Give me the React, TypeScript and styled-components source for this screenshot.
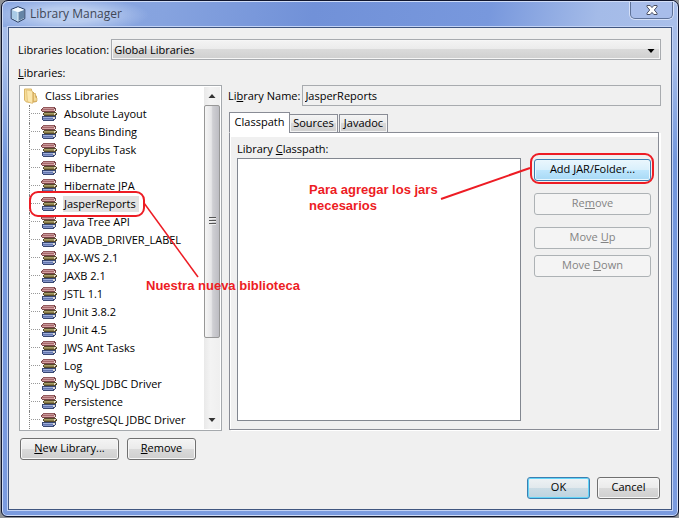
import React from "react";
import styled, { createGlobalStyle, css } from "styled-components";

const Global = createGlobalStyle`
  * { box-sizing: border-box; }
  body { margin: 0; background: #8f9296; }
  body, button, input, select {
    font-family: "Open Sans", "Noto Sans", sans-serif;
    font-size: 11px;
    line-height: 14px;
    color: #000;
  }
  button, input, select { margin: 0; border-radius: 0; }
`;

const Window = styled.div`
  min-height: 100vh;
  display: flex;
  flex-direction: column;
  padding: 0 0 1px 1px;
`;

const Frame = styled.div`
  flex: 1;
  display: flex;
  flex-direction: column;
  border: 1px solid #10162e;
  border-radius: 7px 7px 6px 6px;
  padding: 0 6px 6px;
  background: linear-gradient(180deg, #a9bee9 0, #a5bce9 60px, #7296dc 160px, #7b9bdf 100%);
  box-shadow: inset 0 0 0 1px #cfdcf7;
`;

const TitleBar = styled.header`
  height: 25px;
  margin: 1px -5px 0;
  padding-left: 7px;
  display: flex;
  align-items: flex-start;
  gap: 4px;
  border-radius: 6px 6px 0 0;
  background:
    radial-gradient(ellipse 80px 18px at 66px 13px, rgba(205, 220, 245, 0.7) 40%, rgba(205, 220, 245, 0)),
    linear-gradient(100deg, #8ca9e2 0, #86a3df 24%, #7191d8 46%, #7898dd 72%, #a4bbe8 88%, #a9bfea 100%);
  & > svg { margin-top: 4px; }
`;

const Title = styled.h1`
  flex: 1;
  margin: 4px 0 0;
  font-size: 12px;
  font-weight: 400;
  line-height: 16px;
  color: #3f4757;
`;

const CloseButton = styled.button`
  width: 43px;
  height: 17px;
  margin-right: 4px;
  padding: 0;
  display: flex;
  align-items: center;
  justify-content: center;
  border: 1px solid #5e7299;
  border-top: 0;
  border-radius: 0 0 5px 5px;
  background: #a8bdea;
  box-shadow: 0 0 0 1px #d5e0f8;
`;

const Client = styled.main`
  flex: 1;
  display: flex;
  flex-direction: column;
  padding: 11px 10px 10px;
  border: 1px solid #405680;
  box-shadow: 0 0 0 1px #c3d3f5;
  background: #f0f0f0;
`;

const Field = styled.div`
  display: flex;
  align-items: center;
  gap: 2px;
  white-space: nowrap;
`;

const FieldLabel = styled.label`
  margin-left: -1px;
`;

const buttonFace = "linear-gradient(#f4f4f4 0, #ebebeb 48%, #dadada 50%, #cfcfcf 100%)";

const SelectWrap = styled.div`
  position: relative;
  flex: 1;
  display: flex;
  svg { position: absolute; right: 6px; top: 10px; pointer-events: none; }
`;

const LocationSelect = styled.select`
  flex: 1;
  min-width: 0;
  height: 21px;
  padding: 0 2px;
  appearance: none;
  border: 1px solid #a8abaf;
  background: ${buttonFace};
  box-shadow: inset 0 0 0 1px #f6f6f6;
`;

const ListLabel = styled.div`
  margin: 6px 0 5px -1px;
`;

const Columns = styled.div`
  flex: 1;
  display: grid;
  grid-template-columns: 203px minmax(0, 1fr);
  column-gap: 7px;
`;

const LeftColumn = styled.section`
  position: relative;
  display: flex;
  flex-direction: column;
`;

const TreeBox = styled.div`
  flex: 1;
  display: flex;
  padding: 1px;
  border: 1px solid #a5a9ad;
  background: #fff;
`;

const Tree = styled.ul`
  flex: 1;
  min-width: 0;
  margin: 0;
  padding: 0 0 0 2px;
  list-style: none;
  white-space: nowrap;
`;

const RootRow = styled.li`
  height: 18px;
  display: flex;
  align-items: center;
  gap: 6px;
`;

const Leaf = styled.li`
  height: 18px;
  margin-left: 6px;
  padding-left: 11px;
  display: flex;
  align-items: center;
  gap: 6px;
  border-left: 1px dotted #808080;
  background: repeating-linear-gradient(90deg, #999 0 1px, #fff 1px 2px) 1px 8px / 10px 1px no-repeat;
`;

const LeafName = styled.span<{ $selected?: boolean }>`
  padding: 1px 3px 1px 1px;
  background: ${(p) => (p.$selected ? "#e2e2e2" : "transparent")};
`;

const ScrollBar = styled.div`
  width: 16px;
  display: flex;
  flex-direction: column;
  background: linear-gradient(90deg, #e9e9e9, #f3f3f3 40%, #efefef);
`;

const ScrollArrow = styled.button`
  height: 18px;
  padding: 0;
  border: 0;
  background: transparent;
  display: flex;
  align-items: center;
  justify-content: center;
`;

const ScrollTrack = styled.div`
  flex: 1;
`;

const ScrollThumb = styled.div`
  height: 76%;
  display: flex;
  align-items: center;
  justify-content: center;
  border: 1px solid #979797;
  border-radius: 2px;
  background: linear-gradient(90deg, #f5f5f5 0, #e6e6e8 45%, #cfcfd3 55%, #bdbdc3 100%);
`;

const ButtonRow = styled.div<{ $end?: boolean }>`
  display: flex;
  gap: ${(p) => (p.$end ? "7px" : "8px")};
  justify-content: ${(p) => (p.$end ? "flex-end" : "flex-start")};
  padding: ${(p) => (p.$end ? "0 1px" : "7px 0 0 1px")};
  margin-top: ${(p) => (p.$end ? "17px" : "0")};
`;

type Tone = "normal" | "default" | "hot";

const tones = {
  normal: css`
    border-color: #707070;
    background: ${buttonFace};
    box-shadow: inset 0 0 0 1px #f7f7f7;
  `,
  default: css`
    border-color: #3c7fb1;
    background: linear-gradient(#eef2f4 0, #e2e9ed 48%, #cbdce5 50%, #bdd3df 100%);
    box-shadow: inset 0 0 0 1px #62d4f8;
  `,
  hot: css`
    border-color: #3c7fb1;
    background: linear-gradient(#eaf6fd 0, #d9f0fc 48%, #bee6fd 50%, #a7d9f5 100%);
    box-shadow: inset 0 0 0 1px #e9f7fe;
  `,
};

const PushButton = styled.button<{ $tone?: Tone; $width?: number }>`
  width: ${(p) => (p.$width ? `${p.$width}px` : "100%")};
  height: 22px;
  padding: 0 0 2px;
  border: 1px solid;
  border-radius: 3px;
  white-space: nowrap;
  ${(p) => tones[p.$tone ?? "normal"]}
  &:disabled {
    color: #838383;
    border-color: #adb2b5;
    background: #f4f4f4;
    box-shadow: none;
  }
`;

const RightColumn = styled.section`
  display: flex;
  flex-direction: column;
  margin-bottom: 30px;
`;

const NameInput = styled.input`
  flex: 1;
  min-width: 0;
  height: 21px;
  padding: 0 2px;
  border: 1px solid #a8abaf;
  background: #f0f0f0;
`;

const TabList = styled.div`
  display: flex;
  align-items: flex-end;
  margin: 6px 0 -1px;
  position: relative;
`;

const Tab = styled.button<{ $active?: boolean; $width: number }>`
  width: ${(p) => p.$width}px;
  height: ${(p) => (p.$active ? 21 : 19)}px;
  padding: 0 0 1px;
  border: 1px solid #898c95;
  border-bottom-color: ${(p) => (p.$active ? "#fff" : "#898c95")};
  background: ${(p) => (p.$active ? "#fff" : buttonFace)};
  box-shadow: ${(p) => (p.$active ? "none" : "inset 0 0 0 1px #f4f4f4")};
  & + & { margin-left: 1px; }
  &:nth-child(2) { margin-left: -1px; }
`;

const TabPanel = styled.div`
  flex: 1;
  display: grid;
  grid-template-columns: minmax(0, 1fr) 117px;
  column-gap: 13px;
  margin-right: 2px;
  padding: 5px 7px 8px;
  border: 1px solid #898c95;
  background: linear-gradient(#fff 0 4px, transparent 4px);
  box-shadow: 2px 1px 0 #fff, inset 1px 0 0 #fff;
`;

const ClasspathColumn = styled.div`
  display: flex;
  flex-direction: column;
  gap: 2px;
  padding-top: 4px;
`;

const ClasspathList = styled.div`
  flex: 1;
  border: 1px solid #828790;
  background: #fff;
`;

const Actions = styled.div`
  display: flex;
  flex-direction: column;
  gap: 12px;
  padding-top: 21px;
`;

const MoveGroup = styled.div`
  display: flex;
  flex-direction: column;
  gap: 6px;
`;

const AddWrap = styled.div`
  position: relative;
`;

const Callout = styled.div<{ $left: number; $top: number }>`
  position: absolute;
  left: ${(p) => p.$left}px;
  top: ${(p) => p.$top}px;
  z-index: 2;
  pointer-events: none;
  svg { display: block; }
`;

const Note = styled.p<{ $left: number; $top: number }>`
  position: absolute;
  left: ${(p) => p.$left}px;
  top: ${(p) => p.$top}px;
  margin: 0;
  font: 700 13px/16px "Liberation Sans", Arial, sans-serif;
  color: #ed1c24;
  white-space: nowrap;
`;

const CubeIcon = () => (
  <svg width="16" height="17" viewBox="0 0 16 17">
    <path d="M8 .7 14.8 3.4V12.6L8 16.2 1.2 12.6V3.4Z" fill="#dfeef9" stroke="#24395f" strokeLinejoin="round" />
    <path d="M1.9 4 8 6.3V15.2L1.9 12.1Z" fill="#a9cbe6" />
    <path d="M8 6.3 14.1 4V12.1L8 15.2Z" fill="#6585a6" />
    <path d="M8 1.5 13.7 3.8 8 6 2.3 3.8Z" fill="#f4fafe" />
    <path d="M8 6.3V15.2" stroke="#e6f4fc" />
  </svg>
);

const CloseGlyph = () => (
  <svg width="12" height="10" viewBox="0 0 12 10">
    <path d="M1 .5H4.2L6 2.6 7.8.5H11V1.8L8.3 5 11 8.2V9.5H7.8L6 7.4 4.2 9.5H1V8.2L3.7 5 1 1.8Z" fill="#fff" stroke="#4a4f62" />
  </svg>
);

const FolderIcon = () => (
  <svg width="16" height="16" viewBox="0 0 16 16">
    <path d="M7 4.5 10 4 13.5 8.5V13.5L8 14.5Z" fill="#e6bd6c" stroke="#c9a050" />
    <path d="M10.5 5.5H12.5V9L14 10.5V13L10.5 13.5Z" fill="#f3da98" stroke="#d2ab5d" strokeWidth=".7" />
    <path d="M1.5 1H8.5V14.8L3 13.8 1.5 12Z" fill="#f7dd98" stroke="#d9b567" />
    <path d="M3.5 2 9.5 3V15.5L4.5 13.6Z" fill="#fbe7ae" stroke="#dfbd74" strokeWidth=".7" />
  </svg>
);

const BooksIcon = () => (
  <svg width="16" height="14" viewBox="0 0 16 14" shapeRendering="crispEdges">
    <path d="M2 0H14V1H15V4H14V5H1V4H0V2H1V1H2Z" fill="#7a4448" />
    <path d="M2 0H13V1H2Z" fill="#94595c" />
    <path d="M2 1H13V2H2Z" fill="#c79698" />
    <path d="M1 3H13V4H1Z" fill="#d3a0a0" />
    <path d="M1 2H13V3H1Z" fill="#a8696c" />
    <path d="M13 2H14V4H13Z" fill="#e6dcd6" />
    <path d="M3 5H15V6H16V8H15V9H3V8H2V6H3Z" fill="#564b2b" />
    <path d="M3 6H13V7H3Z" fill="#a99e69" />
    <path d="M3 7H13V8H3Z" fill="#8b7f4a" />
    <path d="M13 6H15V7H14V8H13Z" fill="#e3dcc5" />
    <path d="M1 9H15V12H14V13H13V14H2V13H1Z" fill="#384873" />
    <path d="M2 10H12V11H2Z" fill="#a2b0da" />
    <path d="M2 11H12V12H2Z" fill="#6477b0" />
    <path d="M2 12H12V13H2Z" fill="#8595c8" />
    <path d="M12 10H14V12H12Z" fill="#dcdad6" />
  </svg>
);

const Arrow = ({ up = false, fill = "#333" }: { up?: boolean; fill?: string }) => (
  <svg width="8" height="4" viewBox="0 0 8 4">
    <path d={up ? "M4 0 7.5 4H.5Z" : "M.5 0H7.5L4 4Z"} fill={fill} />
  </svg>
);

const Grip = () => (
  <svg width="7" height="8" viewBox="0 0 7 8" shapeRendering="crispEdges">
    <path d="M0 .5H7M0 3.5H7M0 6.5H7" stroke="#555" />
    <path d="M0 1.5H7M0 4.5H7M0 7.5H7" stroke="#eee" />
  </svg>
);

const libraries = [
  "Absolute Layout", "Beans Binding", "CopyLibs Task", "Hibernate", "Hibernate JPA",
  "JasperReports", "Java Tree API", "JAVADB_DRIVER_LABEL", "JAX-WS 2.1", "JAXB 2.1",
  "JSTL 1.1", "JUnit 3.8.2", "JUnit 4.5", "JWS Ant Tasks", "Log", "MySQL JDBC Driver",
  "Persistence", "PostgreSQL JDBC Driver",
];

export default function App() {
  return (
    <Window>
      <Global />
      <Frame>
        <TitleBar>
          <CubeIcon />
          <Title>Library Manager</Title>
          <CloseButton aria-label="Close"><CloseGlyph /></CloseButton>
        </TitleBar>
        <Client>
          <Field>
            <FieldLabel htmlFor="location">Libraries location:</FieldLabel>
            <SelectWrap>
              <LocationSelect id="location">
                <option>Global Libraries</option>
              </LocationSelect>
              <Arrow fill="#000" />
            </SelectWrap>
          </Field>
          <ListLabel id="libs"><u>L</u>ibraries:</ListLabel>
          <Columns>
            <LeftColumn>
              <TreeBox>
                <Tree role="tree" aria-labelledby="libs">
                  <RootRow role="treeitem"><FolderIcon />Class Libraries</RootRow>
                  {libraries.map((name) => (
                    <Leaf key={name} role="treeitem" aria-selected={name === "JasperReports"}>
                      <BooksIcon />
                      <LeafName $selected={name === "JasperReports"}>{name}</LeafName>
                    </Leaf>
                  ))}
                </Tree>
                <ScrollBar>
                  <ScrollArrow aria-label="Scroll up"><Arrow up /></ScrollArrow>
                  <ScrollTrack><ScrollThumb><Grip /></ScrollThumb></ScrollTrack>
                  <ScrollArrow aria-label="Scroll down"><Arrow /></ScrollArrow>
                </ScrollBar>
              </TreeBox>
              <ButtonRow>
                <PushButton $width={99}><u>N</u>ew Library...</PushButton>
                <PushButton $width={69}><u>R</u>emove</PushButton>
              </ButtonRow>
              <Callout $left={10} $top={105}>
                <svg width="172" height="90" viewBox="0 0 172 90" fill="none" stroke="#ed1c24" strokeWidth="2">
                  <rect x="1" y="2" width="114" height="24" rx="8" />
                  <path d="M115 13 169 87" strokeWidth="1.5" />
                </svg>
                <Note $left={117} $top={88}>Nuestra nueva biblioteca</Note>
              </Callout>
            </LeftColumn>
            <RightColumn>
              <Field>
                <FieldLabel htmlFor="name">Li<u>b</u>rary Name:</FieldLabel>
                <NameInput id="name" readOnly defaultValue="JasperReports" />
              </Field>
              <TabList role="tablist">
                <Tab role="tab" aria-selected $active $width={61}>Classpath</Tab>
                <Tab role="tab" aria-selected={false} $width={49}>Sources</Tab>
                <Tab role="tab" aria-selected={false} $width={49}>Javadoc</Tab>
              </TabList>
              <TabPanel role="tabpanel">
                <ClasspathColumn>
                  <div id="cp">Library <u>C</u>lasspath:</div>
                  <ClasspathList role="listbox" aria-labelledby="cp" />
                </ClasspathColumn>
                <Actions>
                  <AddWrap>
                    <PushButton $tone="hot">Add <u>J</u>AR/Folder...</PushButton>
                    <Callout $left={-96} $top={-6}>
                      <svg width="218" height="50" viewBox="0 0 218 50" fill="none" stroke="#ed1c24" strokeWidth="2">
                        <rect x="93" y="1" width="122" height="29" rx="8" />
                        <path d="M3 46 92 15" />
                      </svg>
                      <Note $left={-129} $top={29}>Para agregar los jars<br />necesarios</Note>
                    </Callout>
                  </AddWrap>
                  <PushButton disabled>Re<u>m</u>ove</PushButton>
                  <MoveGroup>
                    <PushButton disabled>Move <u>U</u>p</PushButton>
                    <PushButton disabled>Move <u>D</u>own</PushButton>
                  </MoveGroup>
                </Actions>
              </TabPanel>
            </RightColumn>
          </Columns>
          <ButtonRow $end>
            <PushButton $tone="default" $width={63}>OK</PushButton>
            <PushButton $width={63}>Cancel</PushButton>
          </ButtonRow>
        </Client>
      </Frame>
    </Window>
  );
}
